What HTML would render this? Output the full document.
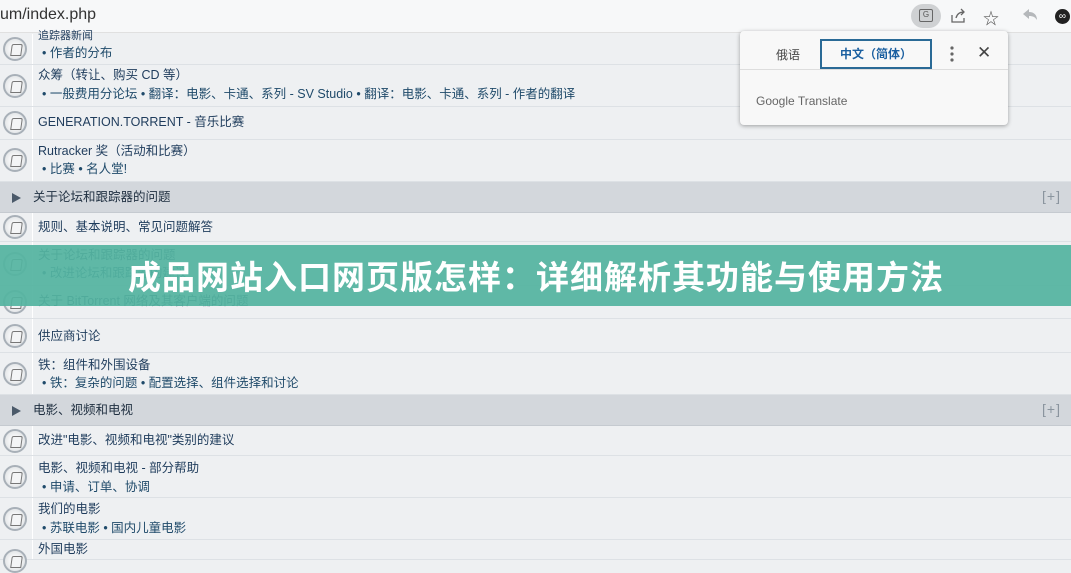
<!DOCTYPE html>
<html><head><meta charset="utf-8"><style>
*{margin:0;padding:0;box-sizing:border-box}
body{width:1071px;height:552px;overflow:hidden;background:#eef0f2;font-family:"Liberation Sans","Noto Sans CJK SC",sans-serif;position:relative;color:#1f3c5c}
.bar{position:absolute;left:0;top:0;width:1071px;height:33px;background:#f7f8f9;border-bottom:1px solid #e0e0e0}
.url{position:absolute;left:0;top:6px;font-size:16px;color:#333}
.row{position:absolute;left:0;width:1071px;background:#eef0f2;border-bottom:1px solid #dde1e5}
.row .ic{position:absolute;left:3px;width:24px;height:24px;border-radius:50%;border:2px solid #a8b0b8;background:radial-gradient(circle,#f4f5f6 40%,#d6dadd 100%)}
.row .ic:after{content:"";position:absolute;left:6px;top:5px;width:9px;height:10px;border:1.5px solid #777;border-radius:2px 2px 0 0;transform:skewX(-8deg)}
.row .sep{position:absolute;left:32px;top:0;bottom:0;border-left:1px solid #fff}
.t{position:absolute;left:38px;font-size:12.5px;line-height:15px;white-space:nowrap;color:#1f3c5c}
.s{position:absolute;left:42px;font-size:12.5px;line-height:15px;white-space:nowrap;color:#1f4a6a}
.cat{position:absolute;left:0;width:1071px;background:#d3d7dc;border-bottom:1px solid #c5cad0}
.cat .tri{position:absolute;left:12px;width:0;height:0;border-left:9px solid #4b5a6a;border-top:5px solid transparent;border-bottom:5px solid transparent}
.cat .ct{position:absolute;left:33px;font-size:12.5px;line-height:15px;color:#1f2f40}
.cat .pl{position:absolute;right:10px;font-size:14px;color:#8a949e;letter-spacing:1px}
.pop{position:absolute;left:740px;top:31px;width:268px;height:94px;background:#f8f8f8;border-radius:4px;box-shadow:0 1px 4px rgba(0,0,0,.35)}
.banner{position:absolute;left:0;top:245px;width:1071px;height:61px;background:rgba(84,180,160,.93);color:#fff;font-weight:bold;font-size:33px;font-family:"Noto Sans CJK SC",sans-serif;line-height:61px;padding-left:128px;letter-spacing:1px}
</style></head><body>
<div class="bar"><div class="url">um/index.php</div>
<div style="position:absolute;left:911px;top:4px;width:30px;height:24px;border-radius:12px;background:#cfd1d3"></div>
<div style="position:absolute;left:919px;top:9px;width:14px;height:13px;border:1.5px solid #666;border-radius:2px;font-size:8px;line-height:10px;text-align:center;color:#555">G</div>
<svg style="position:absolute;left:950px;top:8px" width="16" height="16" viewBox="0 0 16 16" fill="none" stroke="#666" stroke-width="1.3"><path d="M2 7v7h12v-4M6 10c1-4 4-6 8-6M11 1l3 3-3 3"/></svg>
<div style="position:absolute;left:983px;top:5px;font-size:16px;color:#555">☆</div>
<svg style="position:absolute;left:1022px;top:8px" width="16" height="14" viewBox="0 0 16 14"><path d="M1 6l6-5v3c5 0 8 3 8 8-2-3-4-4-8-4v3z" fill="#b5b8bb"/></svg>
<div style="position:absolute;left:1055px;top:9px;width:15px;height:15px;border-radius:50%;background:#222;color:#fff;font-size:10px;line-height:15px;text-align:center">∞</div>
</div>

<div class="row" style="top:34px;height:31px"><div class="ic" style="top:3px"></div><div class="sep"></div><div class="t" style="top:-5px;font-size:11px">追踪器新闻</div><div class="s" style="top:12px">• 作者的分布</div></div>
<div class="row" style="top:65px;height:42px"><div class="ic" style="top:9px"></div><div class="sep"></div><div class="t" style="top:3px">众筹（转让、购买 CD 等）</div><div class="s" style="top:22px">• 一般费用分论坛 • 翻译：电影、卡通、系列 - SV Studio • 翻译：电影、卡通、系列 - 作者的翻译</div></div>
<div class="row" style="top:107px;height:33px"><div class="ic" style="top:4px"></div><div class="sep"></div><div class="t" style="top:8px">GENERATION.TORRENT - 音乐比赛</div></div>
<div class="row" style="top:140px;height:42px"><div class="ic" style="top:8px"></div><div class="sep"></div><div class="t" style="top:4px">Rutracker 奖（活动和比赛）</div><div class="s" style="top:22px">• 比赛 • 名人堂!</div></div>
<div class="cat" style="top:182px;height:31px"><div class="tri" style="top:11px"></div><div class="ct" style="top:8px">关于论坛和跟踪器的问题</div><div class="pl" style="top:6px">[+]</div></div>
<div class="row" style="top:213px;height:29px"><div class="ic" style="top:2px"></div><div class="sep"></div><div class="t" style="top:7px">规则、基本说明、常见问题解答</div></div>
<div class="row" style="top:242px;height:44px"><div class="ic" style="top:10px"></div><div class="sep"></div><div class="t" style="top:6px">关于论坛和跟踪器的问题</div><div class="s" style="top:24px">• 改进论坛和跟踪器的建议</div></div>
<div class="row" style="top:286px;height:33px"><div class="ic" style="top:4px"></div><div class="sep"></div><div class="t" style="top:8px">关于 BitTorrent 网络及其客户端的问题</div></div>
<div class="row" style="top:319px;height:34px"><div class="ic" style="top:5px"></div><div class="sep"></div><div class="t" style="top:10px">供应商讨论</div></div>
<div class="row" style="top:353px;height:42px"><div class="ic" style="top:9px"></div><div class="sep"></div><div class="t" style="top:5px">铁：组件和外围设备</div><div class="s" style="top:23px">• 铁：复杂的问题 • 配置选择、组件选择和讨论</div></div>
<div class="cat" style="top:395px;height:31px"><div class="tri" style="top:11px"></div><div class="ct" style="top:8px">电影、视频和电视</div><div class="pl" style="top:6px">[+]</div></div>
<div class="row" style="top:426px;height:30px"><div class="ic" style="top:3px"></div><div class="sep"></div><div class="t" style="top:7px">改进"电影、视频和电视"类别的建议</div></div>
<div class="row" style="top:456px;height:42px"><div class="ic" style="top:9px"></div><div class="sep"></div><div class="t" style="top:5px">电影、视频和电视 - 部分帮助</div><div class="s" style="top:24px">• 申请、订单、协调</div></div>
<div class="row" style="top:498px;height:42px"><div class="ic" style="top:9px"></div><div class="sep"></div><div class="t" style="top:4px">我们的电影</div><div class="s" style="top:23px">• 苏联电影 • 国内儿童电影</div></div>
<div class="row" style="top:540px;height:20px"><div class="ic" style="top:9px"></div><div class="sep"></div><div class="t" style="top:2px">外国电影</div></div>

<div class="pop">
<div style="position:absolute;left:36px;top:15px;font-size:12px;color:#444">俄语</div>
<div style="position:absolute;left:80px;top:8px;width:112px;height:30px;border:2px solid #2a6a96;font-size:12px;color:#1a5fa0;text-align:center;line-height:26px;font-weight:bold">中文（简体）</div>
<div style="position:absolute;left:0;top:38px;width:268px;border-top:1px solid #ddd"></div>
<svg style="position:absolute;left:209px;top:15px" width="6" height="16"><circle cx="3" cy="2" r="1.6" fill="#666"/><circle cx="3" cy="8" r="1.6" fill="#666"/><circle cx="3" cy="14" r="1.6" fill="#666"/></svg>
<div style="position:absolute;left:237px;top:12px;font-size:17px;color:#444">✕</div>
<div style="position:absolute;left:16px;top:63px;font-size:12px;color:#666">Google Translate</div>
</div>

<div class="banner">成品网站入口网页版怎样：详细解析其功能与使用方法</div>
</body></html>
